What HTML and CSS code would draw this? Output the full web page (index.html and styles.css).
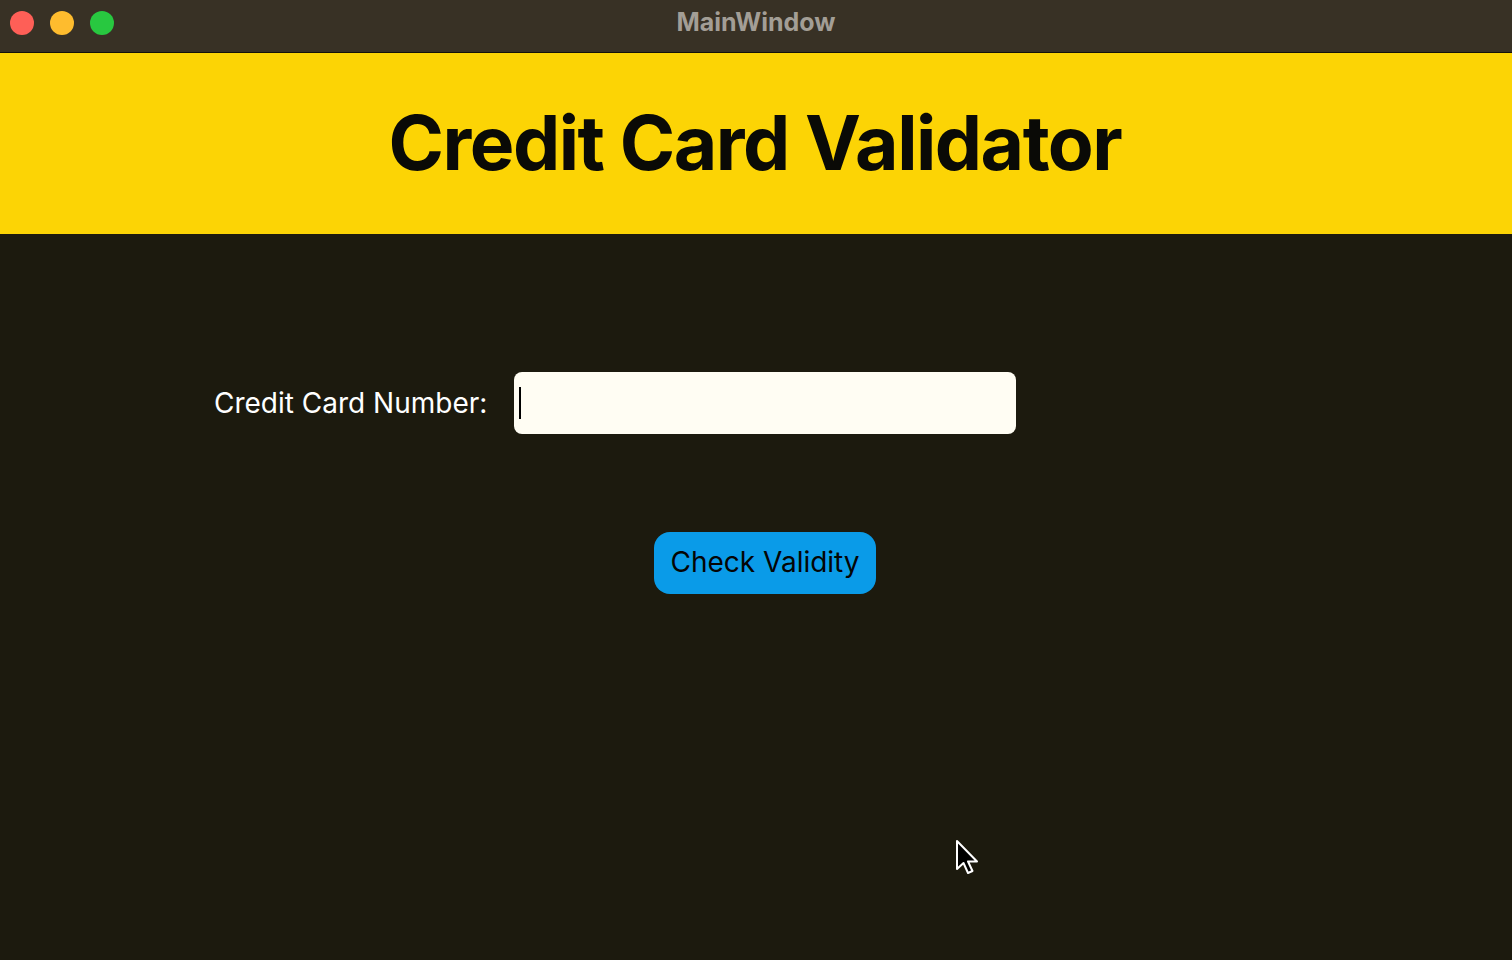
FILE: index.html
```html
<!DOCTYPE html>
<html>
<head>
<meta charset="utf-8">
<link rel="stylesheet" href="styles.css">
</head>
<body>
<div class="window">
  <div class="titlebar">
    <div class="lights">
      <span class="light red"></span>
      <span class="light yellow"></span>
      <span class="light green"></span>
    </div>
    <div class="wtitle">MainWindow</div>
  </div>
  <header class="banner">
    <h1>Credit Card Validator</h1>
  </header>
  <main class="content">
    <div class="form-row">
      <label class="label">Credit Card Number:</label>
      <div class="input"><span class="caret"></span></div>
    </div>
    <div class="btn-row">
      <button class="btn">Check Validity</button>
    </div>
  </main>
  <svg class="pointer" width="26" height="38" viewBox="0 0 26 38">
    <path d="M2 2 L2 30 L8.5 24 L13 34 L17.5 32 L13 22.5 L22 22.5 Z" fill="#000" stroke="#fff" stroke-width="2" stroke-linejoin="round"/>
  </svg>
</div>
</body>
</html>
```
FILE: styles.css
```css
* { box-sizing: border-box; }
html, body { margin: 0; padding: 0; }
body {
  width: 1512px;
  height: 960px;
  overflow: hidden;
  background: #1c1a0e;
  font-family: Inter, "Noto Sans", sans-serif;
}
.window {
  position: relative;
  width: 1512px;
  height: 960px;
  display: flex;
  flex-direction: column;
}
.titlebar {
  height: 53px;
  background: #383125;
  border-bottom: 1px solid #14120a;
  display: flex;
  align-items: center;
  position: relative;
}
.lights {
  display: flex;
  gap: 16px;
  padding-left: 10px;
  padding-bottom: 6px;
}
.light {
  width: 24px;
  height: 24px;
  border-radius: 50%;
  display: block;
}
.red { background: #fe5f57; }
.yellow { background: #febc2e; }
.green { background: #28c840; }
.wtitle {
  position: absolute;
  left: 0;
  right: 0;
  top: 7px;
  text-align: center;
  color: #a39e96;
  font-weight: 700;
  font-size: 25px;
}
.banner {
  height: 181px;
  background: #fcd405;
  display: flex;
  align-items: center;
  justify-content: center;
}
.banner h1 {
  margin: 0;
  font-size: 75px;
  font-weight: 700;
  color: #0a0a06;
  letter-spacing: -1.5px;
  padding-right: 2px;
  padding-bottom: 2px;
}
.content {
  flex: 1;
  display: flex;
  flex-direction: column;
}
.form-row {
  display: flex;
  align-items: center;
  margin-top: 138px;
  padding-left: 214px;
  gap: 27px;
}
.label {
  color: #ffffff;
  font-size: 28px;
  font-weight: 400;
}
.input {
  width: 502px;
  height: 62px;
  background: #fffdf3;
  border-radius: 8px;
  display: flex;
  align-items: center;
  padding-left: 5px;
}
.caret {
  width: 2px;
  height: 32px;
  background: #000;
  display: block;
}
.btn-row {
  margin-top: 98px;
  padding-left: 654px;
}
.btn {
  width: 222px;
  height: 62px;
  background: #0a9be8;
  border: none;
  border-radius: 16px;
  color: #050505;
  font-family: Inter, "Noto Sans", sans-serif;
  font-size: 28px;
  font-weight: 400;
  padding: 0;
  padding-bottom: 2px;
}
.pointer {
  position: absolute;
  left: 955px;
  top: 839px;
}
```
